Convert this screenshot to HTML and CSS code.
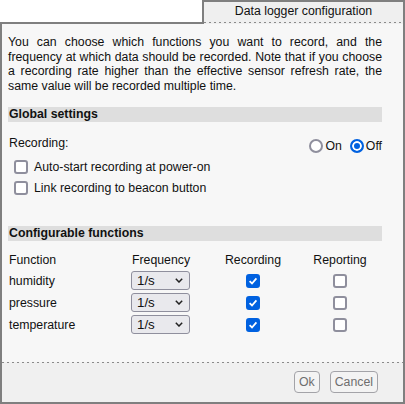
FILE: index.html
```html
<!DOCTYPE html>
<html lang="en">
<head>
<meta charset="utf-8">
<title>Data logger configuration</title>
<link rel="stylesheet" href="styles.css">
</head>
<body>
<div class="dialog">
  <div class="tabbar">
    <div class="tab-spacer"></div>
    <div class="tab">Data logger configuration</div>
  </div>
  <div class="panel">
    <div class="content">
      <p class="intro">You can choose which functions you want to record, and the frequency at which data should be recorded. Note that if you choose a recording rate higher than the effective sensor refresh rate, the same value will be recorded multiple time.</p>
      <div class="section-title">Global settings</div>
      <div class="rec-row">
        <span class="rec-label">Recording:</span>
        <div class="radios">
          <label class="radio"><span class="radio-mark"></span>On</label>
          <label class="radio"><span class="radio-mark checked"></span>Off</label>
        </div>
      </div>
      <label class="check-row"><span class="box"></span>Auto-start recording at power-on</label>
      <label class="check-row"><span class="box"></span>Link recording to beacon button</label>
      <div class="section-title section-gap">Configurable functions</div>
      <div class="functions">
        <div class="head">Function</div>
        <div class="head">Frequency</div>
        <div class="head center">Recording</div>
        <div class="head center">Reporting</div>

        <div class="cell name">humidity</div>
        <div class="cell"><div class="select"><span>1/s</span><svg class="chev" width="8" height="5" viewBox="0 0 8 5"><polyline points="0.8,0.8 4,4 7.2,0.8" fill="none" stroke="#222" stroke-width="1.5"/></svg></div></div>
        <div class="cell center"><span class="box checked"><svg width="10" height="10" viewBox="0 0 10 10"><polyline points="1.6,5.2 4,7.5 8.4,2.4" fill="none" stroke="#fff" stroke-width="1.8"/></svg></span></div>
        <div class="cell center"><span class="box"></span></div>

        <div class="cell name">pressure</div>
        <div class="cell"><div class="select"><span>1/s</span><svg class="chev" width="8" height="5" viewBox="0 0 8 5"><polyline points="0.8,0.8 4,4 7.2,0.8" fill="none" stroke="#222" stroke-width="1.5"/></svg></div></div>
        <div class="cell center"><span class="box checked"><svg width="10" height="10" viewBox="0 0 10 10"><polyline points="1.6,5.2 4,7.5 8.4,2.4" fill="none" stroke="#fff" stroke-width="1.8"/></svg></span></div>
        <div class="cell center"><span class="box"></span></div>

        <div class="cell name">temperature</div>
        <div class="cell"><div class="select"><span>1/s</span><svg class="chev" width="8" height="5" viewBox="0 0 8 5"><polyline points="0.8,0.8 4,4 7.2,0.8" fill="none" stroke="#222" stroke-width="1.5"/></svg></div></div>
        <div class="cell center"><span class="box checked"><svg width="10" height="10" viewBox="0 0 10 10"><polyline points="1.6,5.2 4,7.5 8.4,2.4" fill="none" stroke="#fff" stroke-width="1.8"/></svg></span></div>
        <div class="cell center"><span class="box"></span></div>
      </div>
    </div>
    <div class="footer">
      <button class="btn" disabled>Ok</button>
      <button class="btn" disabled>Cancel</button>
    </div>
  </div>
</div>
</body>
</html>
```
FILE: styles.css
```css
* { box-sizing: border-box; }

html, body {
  margin: 0;
  padding: 0;
  background: #ffffff;
}

body {
  font-family: "Liberation Sans", Arial, sans-serif;
  font-size: 12.3px;
  color: #111;
}

.dialog {
  width: 405px;
  height: 404px;
  display: flex;
  flex-direction: column;
}

.tabbar {
  display: flex;
  height: 24px;
}

.tab-spacer {
  flex: 1;
  height: 24px;
  border-bottom: 2px solid #7f7f7f;
}

.tab {
  width: 203px;
  height: 24px;
  border: 2px solid #7f7f7f;
  border-bottom: none;
  background-color: #efefef;
  background-image: repeating-linear-gradient(to right, #8a8a8a 0 2px, transparent 2px 5px);
  background-size: 100% 1px;
  background-position: 0 20px;
  background-repeat: no-repeat;
  text-align: center;
  line-height: 18px;
  color: #111;
}

.panel {
  flex: 1;
  display: flex;
  flex-direction: column;
  border: 2px solid #7f7f7f;
  border-top: none;
  background: #f7f7f7;
}

.content {
  flex: 1;
  padding: 11px 21px 0 6px;
}

.intro {
  margin: 0;
  line-height: 14.7px;
  text-align: justify;
}

.section-title {
  margin-top: 13px;
  height: 15px;
  line-height: 15px;
  background: #dedede;
  font-weight: bold;
  padding-left: 1px;
}

.section-gap {
  margin-top: 27px;
}

.rec-row {
  display: flex;
  justify-content: space-between;
  align-items: flex-start;
  margin-top: 14px;
  height: 17px;
}

.rec-label {
  line-height: 15px;
  padding-left: 1px;
}

.radios {
  display: flex;
  margin-top: 3px;
  gap: 8px;
}

.radio {
  display: flex;
  align-items: center;
  gap: 2px;
  height: 14px;
  line-height: 14px;
}

.radio-mark {
  width: 14px;
  height: 14px;
  border-radius: 50%;
  border: 2px solid #8f8f9d;
  background: #fff;
}

.radio-mark.checked {
  border-color: #0061e0;
  background: #0061e0;
  box-shadow: inset 0 0 0 2px #fff;
}

.check-row {
  display: flex;
  align-items: center;
  gap: 6px;
  height: 21px;
  padding-left: 6px;
}

.check-row:first-of-type {
  margin-top: 4px;
}

.box {
  display: inline-flex;
  align-items: center;
  justify-content: center;
  width: 14px;
  height: 14px;
  border: 2px solid #8f8f9d;
  border-radius: 3px;
  background: #fff;
}

.box.checked {
  border-color: #0061e0;
  background: #0061e0;
}

.box svg { display: block; }

.functions {
  display: grid;
  grid-template-columns: 123px 75px 94px 80px;
  grid-template-rows: 17px 22px 22px 22px;
  margin-top: 12px;
}

.head {
  line-height: 15px;
  align-self: start;
  padding-left: 1px;
}

.cell {
  display: flex;
  align-items: center;
}

.name {
  padding-left: 1px;
}

.center {
  justify-content: center;
  text-align: center;
  padding-left: 0;
}

.select {
  width: 59px;
  height: 19px;
  border: 1px solid #8f8f9d;
  border-radius: 3px;
  background: #e9e9ed;
  display: flex;
  align-items: center;
  justify-content: space-between;
  padding: 0 6px 0 5px;
  font-size: 13.33px;
  color: #111;
}

.chev { display: block; }

.footer {
  height: 40px;
  background-color: #f0f0f0;
  background-image: repeating-linear-gradient(to right, #8a8a8a 0 2px, transparent 2px 5px);
  background-size: 100% 1px;
  background-position: 0 0;
  background-repeat: no-repeat;
  display: flex;
  justify-content: flex-end;
  align-items: flex-start;
  gap: 10px;
  padding: 9px 25px 0 0;
}

.btn {
  height: 22px;
  padding: 0 4px;
  border: 1px solid #a3a3a8;
  border-radius: 4px;
  background: #f3f3f3;
  color: #6e6e6e;
  font-family: "Liberation Sans", Arial, sans-serif;
  font-size: 12.3px;
  line-height: 20px;
}
```
